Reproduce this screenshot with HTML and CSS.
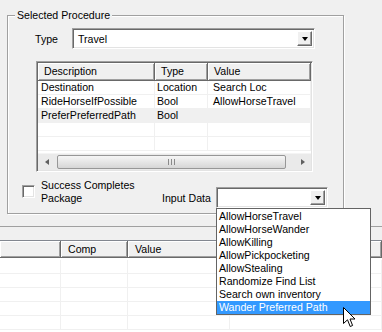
FILE: index.html
```html
<!DOCTYPE html>
<html lang="en">

<head>
    <meta charset="UTF-8">
    <meta name="viewport" content="width=device-width, initial-scale=1.0">
    <title>Selected Procedure</title>
    <link rel="stylesheet" href="styles.css">
</head>

<body>
    <div class="top-panel">
        <div class="group">
            <span class="legend">Selected Procedure</span>
            <div class="type-row">
                <span class="type-label">Type</span>
                <div class="combo type-combo">
                    <span class="combo-text">Travel</span>
                    <span class="drop-btn"><span class="arrow"></span></span>
                </div>
            </div>

            <div class="listview">
                <div class="lv-header">
                    <div class="hcell c-desc">Description</div>
                    <div class="hcell c-type">Type</div>
                    <div class="hcell c-value">Value</div>
                </div>
                <div class="lv-body">
                    <div class="lv-row">
                        <div class="cell c-desc">Destination</div>
                        <div class="cell c-type">Location</div>
                        <div class="cell c-value">Search Loc</div>
                    </div>
                    <div class="lv-row">
                        <div class="cell c-desc">RideHorseIfPossible</div>
                        <div class="cell c-type">Bool</div>
                        <div class="cell c-value">AllowHorseTravel</div>
                    </div>
                    <div class="lv-row selected">
                        <div class="cell c-desc">PreferPreferredPath</div>
                        <div class="cell c-type">Bool</div>
                        <div class="cell c-value"></div>
                    </div>
                    <div class="lv-row">
                        <div class="cell c-desc"></div>
                        <div class="cell c-type"></div>
                        <div class="cell c-value"></div>
                    </div>
                    <div class="lv-row">
                        <div class="cell c-desc"></div>
                        <div class="cell c-type"></div>
                        <div class="cell c-value"></div>
                    </div>
                </div>
                <div class="hscroll">
                    <span class="sb-btn"><span class="tri-left"></span></span>
                    <div class="sb-track">
                        <div class="sb-thumb"><span class="grip"></span></div>
                    </div>
                    <span class="sb-btn"><span class="tri-right"></span></span>
                </div>
            </div>

            <div class="bottom-row">
                <span class="checkbox"></span>
                <span class="check-label">Success Completes<br>Package</span>
                <span class="input-label">Input Data</span>
                <div class="combo input-combo">
                    <span class="combo-text"></span>
                    <span class="drop-btn"><span class="arrow"></span></span>
                </div>
            </div>
        </div>
    </div>

    <div class="lower-panel">
        <div class="lower-list">
            <div class="lv-header">
                <div class="hcell l-first"></div>
                <div class="hcell l-comp">Comp</div>
                <div class="hcell l-value">Value</div>
                <div class="hcell l-rest"></div>
            </div>
            <div class="lower-body">
                <div class="lv-row"><div class="cell l-first"></div><div class="cell l-comp"></div><div class="cell l-value"></div><div class="cell l-rest"></div></div>
                <div class="lv-row"><div class="cell l-first"></div><div class="cell l-comp"></div><div class="cell l-value"></div><div class="cell l-rest"></div></div>
                <div class="lv-row"><div class="cell l-first"></div><div class="cell l-comp"></div><div class="cell l-value"></div><div class="cell l-rest"></div></div>
                <div class="lv-row"><div class="cell l-first"></div><div class="cell l-comp"></div><div class="cell l-value"></div><div class="cell l-rest"></div></div>
                <div class="lv-row"><div class="cell l-first"></div><div class="cell l-comp"></div><div class="cell l-value"></div><div class="cell l-rest"></div></div>
            </div>
        </div>
    </div>

    <!-- open dropdown of the Input Data combo -->
    <ul class="dropdown">
        <li>AllowHorseTravel</li>
        <li>AllowHorseWander</li>
        <li>AllowKilling</li>
        <li>AllowPickpocketing</li>
        <li>AllowStealing</li>
        <li>Randomize Find List</li>
        <li>Search own inventory</li>
        <li class="hot">Wander Preferred Path</li>
    </ul>

    <svg class="cursor" width="13" height="22" viewBox="0 0 13 22">
        <path d="M0.5 0.5 L0.5 16.5 L4.5 12.8 L7.2 19.5 L9.6 18.5 L7 12 L12 12 Z" fill="#fff" stroke="#000" stroke-width="1" stroke-linejoin="miter"/>
    </svg>
</body>

</html>
```

FILE: styles.css
```css
* {
    box-sizing: border-box;
}

body {
    margin: 0;
    width: 382px;
    height: 332px;
    overflow: hidden;
    position: relative;
    background-color: #f0f0f0;
    font-family: "Liberation Sans", Arial, sans-serif;
    font-size: 10.6px;
    color: #000;
}

.top-panel {
    height: 227px;
    padding: 15px 0 0 7px;
    border-bottom: 1px solid #a0a0a0;
}

.group {
    position: relative;
    width: 337px;
    height: 199px;
    border: 1px solid #a0a0a0;
    box-shadow: 1px 1px 0 #fff, inset 1px 1px 0 #fff;
}

.legend {
    position: absolute;
    top: -7px;
    left: 7px;
    padding: 0 2px;
    line-height: 13px;
    background-color: #f0f0f0;
}

.type-row {
    display: flex;
    align-items: center;
    padding: 12px 0 0 27px;
}

.type-label {
    width: 37px;
}

.combo {
    display: flex;
    align-items: center;
    background-color: #fff;
    border: 1px solid;
    border-color: #a0a0a0 #fff #fff #a0a0a0;
    box-shadow: inset 1px 1px 0 #696969, inset -1px -1px 0 #e3e3e3;
    padding: 2px;
}

.type-combo {
    width: 243px;
    height: 21px;
}

.combo-text {
    flex: 1;
    padding-left: 3px;
}

.drop-btn {
    width: 15px;
    height: 100%;
    display: flex;
    align-items: center;
    justify-content: center;
    background-color: #f0f0f0;
    border: 1px solid;
    border-color: #fff #696969 #696969 #fff;
    box-shadow: inset -1px -1px 0 #a0a0a0;
}

.arrow {
    width: 0;
    height: 0;
    border-left: 3.5px solid transparent;
    border-right: 3.5px solid transparent;
    border-top: 4px solid #000;
    margin-top: 1px;
}

/* parameter list */
.listview {
    display: flex;
    flex-direction: column;
    width: 277px;
    height: 111px;
    margin: 12px 0 0 28px;
    background-color: #fff;
    border: 1px solid;
    border-color: #a0a0a0 #fff #fff #a0a0a0;
    box-shadow: inset 1px 1px 0 #696969, inset -1px -1px 0 #e3e3e3;
    padding: 1px;
}

.lv-header {
    display: flex;
    height: 18px;
    flex-shrink: 0;
}

.hcell {
    height: 100%;
    padding: 2px 0 0 6px;
    line-height: 13px;
    background-color: #f0f0f0;
    border-right: 1px solid #696969;
    border-bottom: 1px solid #696969;
    box-shadow: inset 1px 1px 0 #fff, inset -1px -1px 0 #a0a0a0;
    white-space: nowrap;
    overflow: hidden;
}

.c-desc {
    width: 117px;
}

.c-type {
    width: 53px;
}

.c-value {
    flex: 1;
}

.lv-body {
    flex: 1;
    overflow: hidden;
}

.lv-row {
    display: flex;
    height: 14px;
}

.cell {
    height: 100%;
    line-height: 13px;
    padding-left: 3px;
    border-right: 1px solid #f0f0f0;
    border-bottom: 1px solid #f0f0f0;
    white-space: nowrap;
    overflow: hidden;
}

.lv-body .c-type {
    padding-left: 2px;
}

.lv-body .c-value {
    padding-left: 5px;
}

.lv-row.selected {
    background-color: #f0f0f0;
}

.hscroll {
    display: flex;
    align-items: center;
    height: 17px;
    flex-shrink: 0;
    background-color: #eaeaea;
    border-top: 1px solid #f4f4f4;
}

.sb-btn {
    width: 17px;
    height: 100%;
    display: flex;
    align-items: center;
    justify-content: center;
}

.tri-left {
    border-top: 3.5px solid transparent;
    border-bottom: 3.5px solid transparent;
    border-right: 4px solid #606060;
}

.tri-right {
    border-top: 3.5px solid transparent;
    border-bottom: 3.5px solid transparent;
    border-left: 4px solid #606060;
}

.sb-track {
    flex: 1;
    height: 100%;
    padding: 1px 0 1px 2px;
}

.sb-thumb {
    width: 229px;
    height: 100%;
    display: flex;
    align-items: center;
    justify-content: center;
    border: 1px solid #979797;
    border-radius: 2px;
    background: linear-gradient(#f6f6f6, #e6e6e6 50%, #d6d6d6);
}

.grip {
    width: 7px;
    height: 6px;
    border-left: 1px solid #8a8a8a;
    border-right: 1px solid #8a8a8a;
    position: relative;
}

.grip::after {
    content: "";
    position: absolute;
    left: 2px;
    top: 0;
    width: 1px;
    height: 6px;
    background-color: #8a8a8a;
}

.bottom-row {
    display: flex;
    align-items: flex-start;
    margin-top: 7px;
    padding-left: 14px;
}

.checkbox {
    width: 13px;
    height: 13px;
    margin-top: 6px;
    background-color: #fff;
    border: 1px solid;
    border-color: #a0a0a0 #fff #fff #a0a0a0;
    box-shadow: inset 1px 1px 0 #696969, inset -1px -1px 0 #e3e3e3;
}

.check-label {
    width: 121px;
    margin-left: 6px;
    line-height: 13px;
}

.input-label {
    width: 54px;
    margin-top: 13px;
    line-height: 13px;
}

.input-combo {
    width: 112px;
    height: 21px;
    margin-top: 8px;
}

/* lower list */
.lower-panel {
    padding-top: 13px;
}

.lower-list {
    height: 92px;
    background-color: #fff;
    border-top: 1px solid #828790;
}

.lower-list .lv-header {
    height: 17px;
}

.lower-list .hcell {
    padding-left: 7px;
}

.lower-body {
    padding-top: 2px;
}

.l-first {
    width: 61px;
}

.l-comp {
    width: 67px;
}

.l-value {
    width: 102px;
}

.l-rest {
    flex: 1;
}

.dropdown {
    position: absolute;
    left: 216px;
    top: 208px;
    width: 155px;
    margin: 0;
    padding: 1px 0 0;
    list-style: none;
    background-color: #fff;
    border: 1px solid #646464;
}

.dropdown li {
    height: 13px;
    line-height: 13px;
    padding-left: 2px;
    white-space: nowrap;
}

.dropdown li.hot {
    background-color: #3399ff;
    color: #fff;
}

.cursor {
    position: absolute;
    left: 343px;
    top: 307px;
}
```
